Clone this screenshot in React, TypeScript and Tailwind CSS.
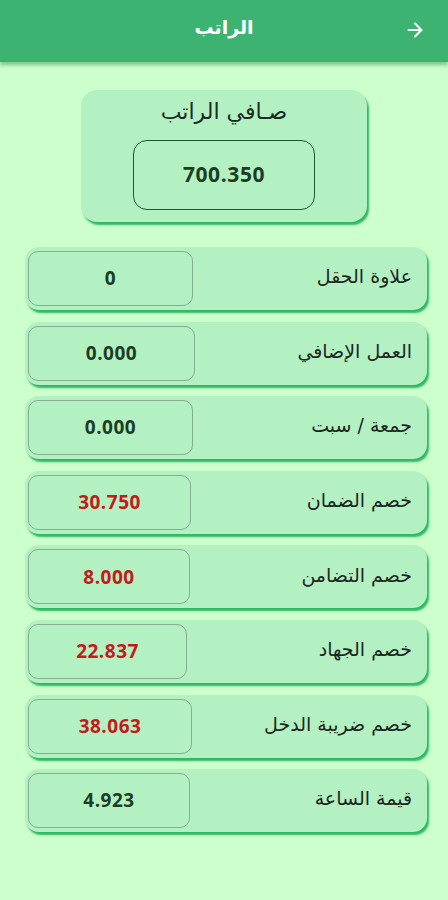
import React from 'react';
import { ArrowRight } from 'lucide-react';

type Row = { label: string; value: string; red?: boolean; w: number };

const rows: Row[] = [
  { label: 'علاوة الحقل', value: '0', w: 165 },
  { label: 'العمل الإضافي', value: '0.000', w: 167 },
  { label: 'جمعة / سبت', value: '0.000', w: 165 },
  { label: 'خصم الضمان', value: '30.750', red: true, w: 163 },
  { label: 'خصم التضامن', value: '8.000', red: true, w: 162 },
  { label: 'خصم الجهاد', value: '22.837', red: true, w: 159 },
  { label: 'خصم ضريبة الدخل', value: '38.063', red: true, w: 164 },
  { label: 'قيمة الساعة', value: '4.923', w: 162 },
];

export default function App() {
  return (
    <div dir="rtl" className="min-h-screen bg-[#ccffcc] flex flex-col" style={{ fontFamily: '"DejaVu Sans", sans-serif' }}>
      {/* header */}
      <div className="h-[62px] bg-[#3cb371] flex items-center justify-center pb-[8px] relative shadow-[0_3px_4px_rgba(40,120,60,0.45)]">
        <ArrowRight className="absolute right-[22px] top-[19px] text-white" size={22} strokeWidth={2.2} />
        <h1 className="text-white text-[19px] font-bold">الراتب</h1>
      </div>

      {/* net salary */}
      <div className="mt-[28px] self-center w-[286px] h-[132px] rounded-[16px] bg-[#b3f0c2] shadow-[2px_3px_2px_#2fb864] flex flex-col items-center pt-[7px]">
        <div className="text-[22px] text-[#1c2a1f] leading-[30px]">صـافي الراتب</div>
        <div className="mt-[13px] w-[182px] h-[70px] rounded-[14px] border-[1.5px] border-[#1e5a2a] flex items-center justify-center">
          <span dir="ltr" className="text-[21px] font-bold tracking-[0.6px] text-[#1c3d24]" style={{ fontFamily: '"Open Sans", sans-serif' }}>700.350</span>
        </div>
      </div>

      {/* rows */}
      <div className="mt-[25px] flex flex-col gap-[11.6px] px-[25px] pr-[21px]">
        {rows.map((r) => (
          <div key={r.label} className="h-[63px] rounded-[14px] bg-[#b3f0c2] shadow-[2px_3px_2px_#2fb864] flex items-center justify-between pr-[15px] pl-[3px]">
            <span className="text-[19px] text-[#1b261d] mb-[4px]">{r.label}</span>
            <div style={{ width: r.w }} className="h-[55px] rounded-[10px] border border-[#86ad90] flex items-center justify-center">
              <span dir="ltr" className={`text-[19px] font-bold tracking-[0.5px] ${r.red ? 'text-[#c41a1a]' : 'text-[#1c3d24]'}`} style={{ fontFamily: '"Open Sans", sans-serif' }}>{r.value}</span>
            </div>
          </div>
        ))}
      </div>
    </div>
  );
}
